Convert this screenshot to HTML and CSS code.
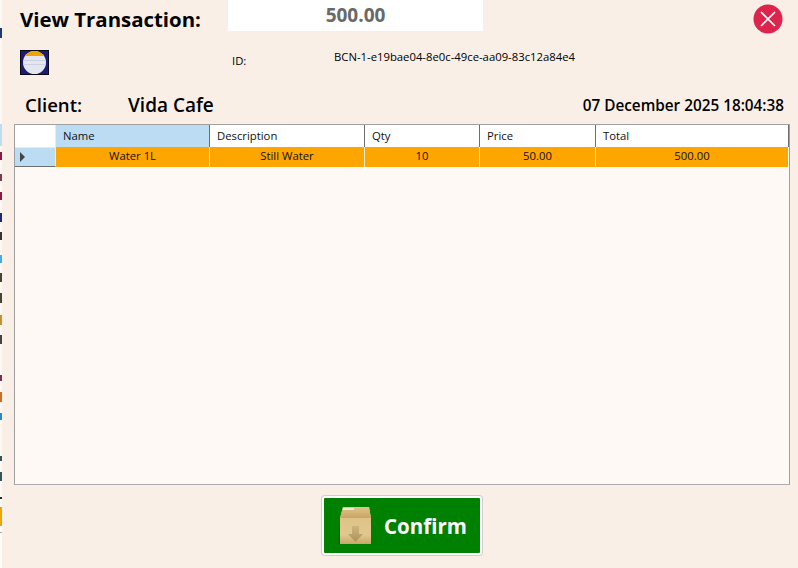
FILE: index.html
```html
<!DOCTYPE html>
<html lang="en">

<head>
    <meta charset="UTF-8" />
    <title>View Transaction</title>
    <link rel="stylesheet" href="styles.css">
</head>

<body>
    <!-- sliver of the window behind -->
    <div class="behind"></div>

    <div class="dialog">
        <div class="top">
            <h1 class="title">View Transaction:</h1>
            <div class="amount">500.00</div>
            <a href="javascript:;" class="close">
                <svg width="30" height="30" viewBox="0 0 30 30">
                    <circle cx="15" cy="15" r="14.5" fill="#dc244c" />
                    <path d="M8.5 8.5 L21.5 21.5 M21.5 8.5 L8.5 21.5" stroke="#fff" stroke-width="1.7" stroke-linecap="round" />
                </svg>
            </a>
        </div>

        <div class="idrow">
            <svg class="logo" width="29" height="25" viewBox="0 0 29 25">
                <defs>
                    <clipPath id="disc"><circle cx="14.5" cy="12.5" r="11.5" /></clipPath>
                </defs>
                <rect width="29" height="25" fill="#0a0a14" />
                <rect x="1" y="1" width="27" height="23" fill="#1c1c78" />
                <g clip-path="url(#disc)">
                    <rect width="29" height="25" fill="#e4e6f0" />
                    <rect width="29" height="6" fill="#f0a400" />
                    <path d="M0 10.5 H29 M0 14.5 H29" stroke="#cdd0de" stroke-width="1" />
                </g>
            </svg>
            <span class="idlabel">ID:</span>
            <span class="idvalue">BCN-1-e19bae04-8e0c-49ce-aa09-83c12a84e4</span>
        </div>

        <div class="clientrow">
            <span class="clientlabel">Client:</span>
            <span class="clientname">Vida Cafe</span>
            <span class="date">07 December 2025 18:04:38</span>
        </div>

        <div class="grid">
            <div class="cell corner"></div>
            <div class="cell head head-on">Name</div>
            <div class="cell head">Description</div>
            <div class="cell head">Qty</div>
            <div class="cell head">Price</div>
            <div class="cell head last">Total</div>

            <div class="cell rowhead"><span class="arrow"></span></div>
            <div class="cell data">Water 1L</div>
            <div class="cell data">Still Water</div>
            <div class="cell data">10</div>
            <div class="cell data">50.00</div>
            <div class="cell data last">500.00</div>
        </div>

        <div class="actions">
            <a href="javascript:;" class="confirm">
                <svg width="36" height="40" viewBox="0 0 36 40">
                    <defs>
                        <linearGradient id="boxfront" x1="0" y1="0" x2="0" y2="1">
                            <stop offset="0" stop-color="#dcc084" />
                            <stop offset="0.75" stop-color="#e0c88e" />
                            <stop offset="1" stop-color="#c8a868" />
                        </linearGradient>
                        <linearGradient id="boxlid" x1="0" y1="0" x2="0" y2="1">
                            <stop offset="0" stop-color="#e0c48c" />
                            <stop offset="1" stop-color="#c9a564" />
                        </linearGradient>
                        <linearGradient id="boxarrow" x1="0" y1="0" x2="0" y2="1">
                            <stop offset="0" stop-color="#cdb480" />
                            <stop offset="1" stop-color="#ad9258" />
                        </linearGradient>
                    </defs>
                    <path d="M0 38 L2 14 H6 V38 Z" fill="#056a05" />
                    <path d="M5 1 H31 L33 12 V38 H2 V12 Z" fill="url(#boxfront)" />
                    <path d="M5 1 H31 L33 12 H2 Z" fill="url(#boxlid)" />
                    <rect x="5" y="2" width="11" height="2" fill="#efe8d6" />
                    <path d="M14 20 H21 V28 H25 L17.5 36 L10 28 H14 Z" fill="url(#boxarrow)" />
                </svg>
                <span>Confirm</span>
            </a>
        </div>
    </div>
</body>

</html>
```

FILE: styles.css
```css
* {
    margin: 0;
    padding: 0;
    box-sizing: border-box;
}

body {
    display: flex;
    width: 798px;
    height: 568px;
    overflow: hidden;
    background-color: #f9efe6;
    font-family: "Open Sans", "Noto Sans", sans-serif;
    color: #000;
}

a {
    text-decoration: none;
}

.behind {
    flex: none;
    width: 2px;
    height: 568px;
    background: linear-gradient(to bottom,
        #fdf8f3 0, #fdf8f3 28px, #1a3a7a 28px, #1a3a7a 38px, #fdf8f3 38px,
        #fdf8f3 124px, #bcdcf4 124px, #bcdcf4 146px, #fdf8f3 146px,
        #fdf8f3 152px, #8a1a40 152px, #8a1a40 160px, #fdf8f3 160px,
        #fdf8f3 174px, #7a3a50 174px, #7a3a50 181px, #fdf8f3 181px,
        #fdf8f3 192px, #8a1a40 192px, #8a1a40 200px, #fdf8f3 200px,
        #fdf8f3 213px, #1a2a70 213px, #1a2a70 222px, #fdf8f3 222px,
        #fdf8f3 232px, #333 232px, #333 240px, #fdf8f3 240px,
        #fdf8f3 255px, #4aa8e0 255px, #4aa8e0 263px, #fdf8f3 263px,
        #fdf8f3 273px, #443 273px, #443 282px, #fdf8f3 282px,
        #fdf8f3 293px, #443 293px, #443 303px, #fdf8f3 303px,
        #fdf8f3 315px, #c89030 315px, #c89030 325px, #fdf8f3 325px,
        #fdf8f3 335px, #444 335px, #444 344px, #fdf8f3 344px,
        #fdf8f3 375px, #7a3050 375px, #7a3050 381px, #fdf8f3 381px,
        #fdf8f3 392px, #c87020 392px, #c87020 402px, #fdf8f3 402px,
        #fdf8f3 413px, #2a88d0 413px, #2a88d0 420px, #fdf8f3 420px,
        #fdf8f3 456px, #355 456px, #355 461px, #fdf8f3 461px,
        #fdf8f3 472px, #355 472px, #355 481px, #fdf8f3 481px,
        #fdf8f3 497px, #223 497px, #223 499px, #fdf8f3 499px,
        #fdf8f3 507px, #f0a400 507px, #f0a400 526px, #fffdfb 526px,
        #fffdfb 532px, #aaa 532px, #aaa 533px, #fffdfb 533px);
}

.dialog {
    flex: 1;
    display: flex;
    flex-direction: column;
    padding: 0 8px 0 12px;
}

.top {
    display: flex;
    height: 31px;
}

.title {
    width: 214px;
    padding: 7px 0 0 6px;
    font-size: 20.4px;
    line-height: 25px;
    font-weight: 700;
}

.amount {
    width: 255px;
    height: 31px;
    background-color: #fff;
    text-align: center;
    font-size: 19px;
    line-height: 31px;
    font-weight: 700;
    color: #696969;
}

.close {
    display: block;
    width: 30px;
    height: 30px;
    margin: 4px 0 0 270px;
}

.idrow {
    display: flex;
    height: 53px;
    padding: 19px 0 0 6px;
    font-size: 11.3px;
}

.logo {
    flex: none;
    margin-right: 183px;
}

.idlabel {
    width: 102px;
    padding-top: 3px;
    line-height: 16px;
}

.idvalue {
    margin-top: -1px;
    line-height: 16px;
}

.clientrow {
    display: flex;
    align-items: baseline;
    height: 40px;
    padding: 8px 6px 0 11px;
    font-weight: 600;
}

.clientlabel {
    width: 103px;
    font-size: 18.6px;
    line-height: 26px;
}

.clientname {
    flex: 1;
    font-size: 19px;
    line-height: 26px;
}

.date {
    align-self: flex-start;
    font-size: 15.3px;
    line-height: 26px;
    font-weight: 600;
}

.grid {
    display: grid;
    grid-template-columns: 41px 154px 155px 115px 116px 193px;
    grid-template-rows: 22px 20px;
    align-content: start;
    width: 776px;
    height: 361px;
    background-color: #fff9f5;
    border: 1px solid #a0a0a0;
    border-bottom-color: #acacb0;
    font-size: 11.3px;
    line-height: 18px;
}

.cell {
    color: #111;
}

.corner {
    background-color: #fff;
    border-right: 1px solid #f4e8dc;
}

.head {
    padding: 2px 0 0 7px;
    background-color: #fff;
    border-right: 1px solid #6e6e6e;
}

.head-on {
    background-color: #bcdcf4;
}

.rowhead {
    display: flex;
    align-items: center;
    padding-left: 5px;
    background-color: #bcdcf4;
    border-top: 1px solid #f4e8dc;
    border-bottom: 1px solid #6e6e6e;
    border-right: 1px solid #f4e8dc;
}

.arrow {
    width: 0;
    height: 0;
    border-left: 5px solid #444;
    border-top: 5px solid transparent;
    border-bottom: 5px solid transparent;
}

.data {
    background-color: #ffa500;
    border-right: 1px solid #fdeccd;
    text-align: center;
}

.data.last {
    border-right: 1px solid #fff;
}

.actions {
    display: flex;
    justify-content: center;
    padding-top: 11px;
}

.confirm {
    display: flex;
    align-items: center;
    gap: 10px;
    width: 160px;
    height: 59px;
    padding-left: 14px;
    background-color: #008000;
    border: 2px solid #fff;
    border-radius: 3px;
    box-shadow: 0 0 0 1px #d0cfcf;
    color: #fff;
    font-size: 20.5px;
    font-weight: 700;
}
```
